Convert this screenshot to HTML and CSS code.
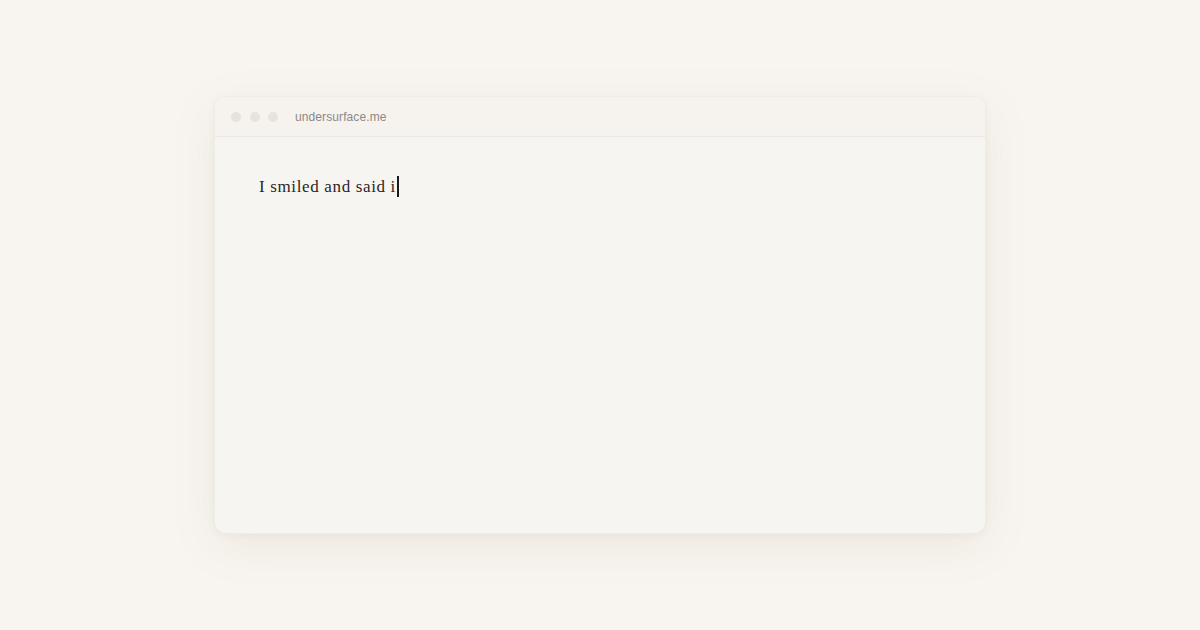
FILE: index.html
```html
<!DOCTYPE html>
<html lang="en">
<head>
    <meta charset="UTF-8">
    <meta name="viewport" content="width=device-width, initial-scale=1.0">
    <title>undersurface.me</title>
    <link rel="stylesheet" href="styles.css">
</head>
<body>
    <div class="stage">
        <div class="window">
            <div class="titlebar">
                <div class="dots">
                    <span class="dot"></span>
                    <span class="dot"></span>
                    <span class="dot"></span>
                </div>
                <span class="url">undersurface.me</span>
            </div>
            <div class="editor">
                <p class="line">I smiled and said i<span class="caret"></span></p>
            </div>
        </div>
    </div>
</body>
</html>
```

FILE: styles.css
```css
* {
    margin: 0;
    padding: 0;
    box-sizing: border-box;
}

body {
    background: #f8f5f0;
    font-family: 'Liberation Sans', Arial, sans-serif;
    width: 1200px;
    height: 630px;
    overflow: hidden;
}

.stage {
    padding-top: 96px;
    display: flex;
    justify-content: center;
}

.window {
    width: 772px;
    height: 438px;
    background: #f7f5f2;
    border-radius: 12px;
    border: 1px solid #efece7;
    box-shadow: 0 12px 48px rgba(120, 100, 70, 0.09), 0 2px 6px rgba(120, 100, 70, 0.05);
    overflow: hidden;
}

.titlebar {
    height: 40px;
    display: flex;
    align-items: center;
    padding-left: 16px;
    gap: 17px;
    background: #f6f3ef;
    border-bottom: 1px solid #ebe8e3;
}

.dots {
    display: flex;
    gap: 8.5px;
}

.dot {
    width: 10px;
    height: 10px;
    border-radius: 50%;
    background: #e6e3df;
}

.url {
    font-size: 12px;
    color: #8c8884;
    letter-spacing: 0.1px;
}

.editor {
    padding: 39px 44px;
}

.line {
    font-family: 'Liberation Serif', 'Times New Roman', serif;
    font-size: 17px;
    color: #2a2724;
    letter-spacing: 0.65px;
    display: flex;
    align-items: center;
}

.caret {
    display: inline-block;
    width: 1.5px;
    height: 21px;
    background: #1c1a18;
    margin-left: 1px;
}
```
